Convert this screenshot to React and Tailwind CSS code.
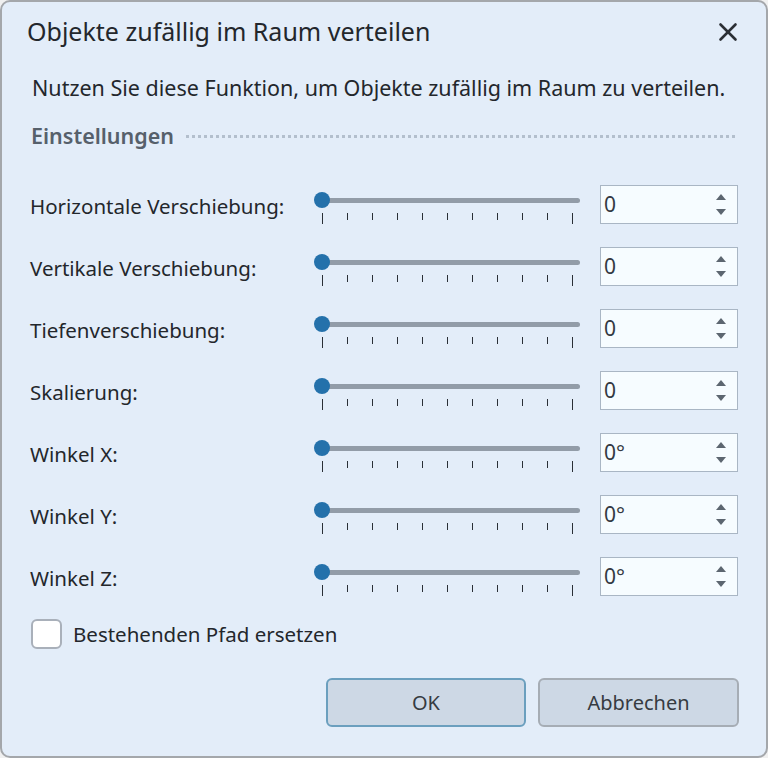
import React from "react";
import { X } from "lucide-react";

const FONT = { fontFamily: '"Noto Sans", "Open Sans", sans-serif' };

const rows = [
  { label: "Horizontale Verschiebung:", value: "0" },
  { label: "Vertikale Verschiebung:", value: "0" },
  { label: "Tiefenverschiebung:", value: "0" },
  { label: "Skalierung:", value: "0" },
  { label: "Winkel X:", value: "0°" },
  { label: "Winkel Y:", value: "0°" },
  { label: "Winkel Z:", value: "0°" },
];

function Slider() {
  const ticks = Array.from({ length: 11 });
  return (
    <div className="w-[266px] mt-[4px]">
      <div className="relative h-[16px] flex items-center pl-[8px]">
        <div className="h-[5px] w-full rounded-full bg-[#929ca8]" />
        <div className="absolute left-0 top-0 w-[16px] h-[16px] rounded-full bg-[#2471ab]" />
      </div>
      <div className="mt-[5px] ml-[8px] w-[251px] h-[11px] flex justify-between items-start">
        {ticks.map((_, i) => (
          <div
            key={i}
            className={`w-[1px] bg-[#2a2f36] ${i === 0 || i === ticks.length - 1 ? "h-[11px]" : "h-[7px]"}`}
          />
        ))}
      </div>
    </div>
  );
}

function SpinBox({ value }) {
  return (
    <div className="ml-auto mr-[28px] mb-[3px] w-[138px] h-[39px] border border-[#a9b6c4] bg-[#f6fcff] flex items-center justify-between pl-[3px] pr-[11px]">
      <span className="text-[21px] text-[#333a42]">{value}</span>
      <div className="flex flex-col items-center gap-[9px]">
        <svg width="10" height="6" viewBox="0 0 10 6">
          <path d="M0 6 L5 0 L10 6 Z" fill="#5c6670" />
        </svg>
        <svg width="10" height="6" viewBox="0 0 10 6">
          <path d="M0 0 L5 6 L10 0 Z" fill="#5c6670" />
        </svg>
      </div>
    </div>
  );
}

export default function App() {
  return (
    <div className="w-[768px] h-[758px] bg-[#f0f0f0]" style={FONT}>
      <div className="h-full rounded-[10px] border-2 border-[#a4a7ab] bg-[#e3edf9] flex flex-col text-[#23272c]">
        <div className="h-[60px] flex items-center justify-between pl-[25px] pr-[23px]">
          <span className="text-[25px]">Objekte zufällig im Raum verteilen</span>
          <X size={30} strokeWidth={2.1} className="text-[#2b2f35]" />
        </div>

        <div className="h-[52px] flex items-center pl-[30px] text-[21.5px]">
          Nutzen Sie diese Funktion, um Objekte zufällig im Raum zu verteilen.
        </div>

        <div className="h-[44px] flex items-center pl-[29px] pr-[31px] gap-[12px]">
          <span className="text-[21.5px] font-semibold text-[#56606b]">Einstellungen</span>
          <div className="flex-1 border-t-[3px] border-dotted border-[#b3bfcd]" />
        </div>

        <div className="h-[17px]" />

        {rows.map((r) => (
          <div key={r.label} className="h-[62px] flex items-center pl-[28px]">
            <span className="w-[284px] text-[20.5px]">{r.label}</span>
            <Slider />
            <SpinBox value={r.value} />
          </div>
        ))}

        <div className="h-[50px] flex items-center pl-[29px] gap-[11px]">
          <div className="w-[31px] h-[30px] rounded-[6px] border-2 border-[#a9b0ba] bg-white" />
          <span className="text-[20.5px]">Bestehenden Pfad ersetzen</span>
        </div>

        <div className="mt-[19px] flex justify-end gap-[12px] pr-[27px]">
          <button className="w-[200px] h-[49px] rounded-[6px] border-2 border-[#6b9fbe] bg-[#cdd8e5] text-[20px] text-[#363b41]">
            OK
          </button>
          <button className="w-[201px] h-[49px] rounded-[6px] border-2 border-[#a6adb5] bg-[#cdd8e5] text-[20px] text-[#363b41]">
            Abbrechen
          </button>
        </div>
      </div>
    </div>
  );
}
